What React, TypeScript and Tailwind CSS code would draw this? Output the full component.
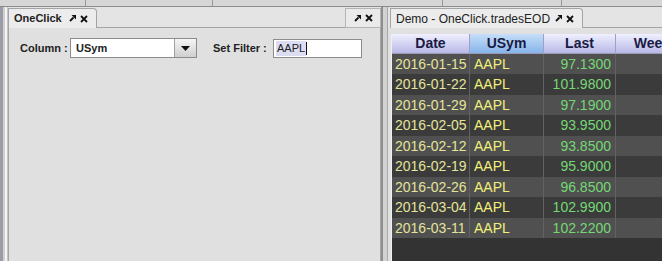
import React from "react"

const rows = [
  { date: "2016-01-15", sym: "AAPL", last: "97.1300" },
  { date: "2016-01-22", sym: "AAPL", last: "101.9800" },
  { date: "2016-01-29", sym: "AAPL", last: "97.1900" },
  { date: "2016-02-05", sym: "AAPL", last: "93.9500" },
  { date: "2016-02-12", sym: "AAPL", last: "93.8500" },
  { date: "2016-02-19", sym: "AAPL", last: "95.9000" },
  { date: "2016-02-26", sym: "AAPL", last: "96.8500" },
  { date: "2016-03-04", sym: "AAPL", last: "102.9900" },
  { date: "2016-03-11", sym: "AAPL", last: "102.2200" },
]

const Pin = () => (
  <svg width="7" height="7" viewBox="0 0 7 7" className="block">
    <path d="M7 0 L7 4.5 L2.5 0 Z" fill="#111" />
    <path d="M4.5 2.5 L1 6" stroke="#111" strokeWidth="1.8" />
  </svg>
)

const Close = () => (
  <svg width="8" height="8" viewBox="0 0 8 8" className="block">
    <path d="M1 1 L7 7 M7 1 L1 7" stroke="#111" strokeWidth="1.8" />
  </svg>
)

const TabIcons = () => (
  <div className="flex items-center gap-[4px]">
    <Pin />
    <Close />
  </div>
)

export default function App() {
  return (
    <div className="w-[662px] h-[261px] overflow-hidden flex flex-col bg-[#e2e2e2] font-['Liberation_Sans',Arial,sans-serif] text-[#222]">
      {/* toolbar remnant */}
      <div className="h-[7px] flex border-b border-[#8c8c8c] bg-[#d6d6d6]">
        <div className="w-[86px] border-r border-[#9a9a9a]" />
        <div className="w-[127px] border-r border-[#9a9a9a]" />
        <div className="w-[230px] border-r border-[#9a9a9a]" />
        <div className="w-[119px] border-r border-[#9a9a9a]" />
        <div className="flex-1" />
      </div>

      <div className="flex flex-1 min-h-0">
        {/* left edge */}
        <div className="w-[8px] flex">
          <div className="w-[3px] bg-[#9c9ca8]" />
          <div className="w-[2px] bg-[#cfcfcf]" />
          <div className="w-[2px] bg-[#f4f4f4]" />
          <div className="w-[1px] bg-[#c4c4c4]" />
        </div>

        {/* OneClick panel */}
        <div className="w-[373px] flex flex-col">
          <div className="h-[21px] flex items-end bg-[#e4e4e4]">
            <div className="w-[89px] h-[20px] flex items-center justify-between pl-[5px] pr-[8px] bg-[#ececec] border border-b-0 border-[#a4a4a4] rounded-tr-[4px]">
              <span className="text-[11px] font-bold">OneClick</span>
              <TabIcons />
            </div>
            <div className="flex-1 h-full border-b border-[#a4a4a4]" />
            <div className="w-[36px] h-[20px] flex items-center justify-center bg-[#eaeaea] border border-[#b4b4b4]">
              <TabIcons />
            </div>
          </div>
          <div className="flex-1 bg-[#e0e0e0] border-l border-r border-[#a4a4a4] pl-[11px] pt-[10px]">
            <div className="flex items-center h-[20px]">
              <span className="text-[11px] font-bold w-[50px]">Column :</span>
              <div className="w-[127px] h-[20px] flex border border-[#8c8c8c] bg-white">
                <div className="flex-1 flex items-center pl-[5px] text-[11px] font-bold">USym</div>
                <div className="w-[22px] flex items-center justify-center border-l border-[#a0a0a0] bg-gradient-to-b from-[#f6f6f6] to-[#cfcfcf]">
                  <svg width="9" height="5" viewBox="0 0 9 5" className="block">
                    <path d="M0 0 L9 0 L4.5 5 Z" fill="#111" />
                  </svg>
                </div>
              </div>
              <span className="text-[11px] font-bold ml-[16px] w-[60px]">Set Filter :</span>
              <div className="w-[89px] h-[19px] flex items-center border border-[#8c8c8c] bg-white pl-[2px]">
                <span className="text-[11px] bg-[#dcdcf2] px-[1px] leading-[15px]">AAPL</span>
                <span className="w-[1px] h-[13px] bg-[#111]" />
              </div>
            </div>
          </div>
        </div>

        {/* splitter */}
        <div className="w-[7px] flex">
          <div className="w-[2px] bg-[#8e8e8e]" />
          <div className="w-[4px] bg-[#d2d2d2]" />
          <div className="w-[1px] bg-[#a8a8a8]" />
        </div>

        {/* table panel */}
        <div className="flex-1 flex flex-col min-w-0">
          <div className="h-[21px] flex items-end bg-[#e4e4e4]">
            <div className="ml-[2px] w-[193px] h-[20px] flex items-center justify-between pl-[5px] pr-[8px] bg-[#ececec] border border-b-0 border-[#a4a4a4] rounded-tr-[4px]">
              <span className="text-[12px]">Demo - OneClick.tradesEOD</span>
              <TabIcons />
            </div>
            <div className="flex-1 h-full border-b border-[#a4a4a4]" />
          </div>
          <div className="flex-1 flex flex-col min-h-0 bg-[#e0e0e0] pt-[6px] pl-[3px]">
            <div className="flex-1 flex flex-col bg-[#333333] overflow-hidden border-l border-[#f0f0f0]">
              <div className="h-[20px] flex shrink-0 text-[14px] font-bold text-[#1a1a44] border-b border-[#9a9ab8]">
                <div className="w-[78px] shrink-0 flex items-center justify-center bg-gradient-to-b from-[#f0f0ff] to-[#b8b8e6] border-r border-[#a0a0c4]">Date</div>
                <div className="w-[74px] shrink-0 flex items-center justify-center bg-gradient-to-b from-[#c6def8] to-[#86b4ea] border-r border-[#a0a0c4]">USym</div>
                <div className="w-[72px] shrink-0 flex items-center justify-center bg-gradient-to-b from-[#f0f0ff] to-[#b8b8e6] border-r border-[#a0a0c4]">Last</div>
                <div className="w-[72px] shrink-0 flex items-center justify-center bg-gradient-to-b from-[#f0f0ff] to-[#b8b8e6] whitespace-nowrap">Week</div>
              </div>
              {rows.map((r, i) => (
                <div
                  key={r.date}
                  className={`flex shrink-0 text-[14px] ${i % 2 === 0 ? "h-[20px] bg-[#505050]" : "h-[21px] bg-[#3b3b3b]"}`}
                >
                  <div className="w-[78px] shrink-0 flex items-center pl-[3px] text-[#e4e49a] border-r border-[#626262]">{r.date}</div>
                  <div className="w-[74px] shrink-0 flex items-center pl-[4px] text-[#f0f07a] border-r border-[#626262]">{r.sym}</div>
                  <div className="w-[72px] shrink-0 flex items-center justify-end pr-[4px] text-[#74d874] border-r border-[#626262]">{r.last}</div>
                  <div className="w-[72px] shrink-0" />
                </div>
              ))}
            </div>
          </div>
        </div>
      </div>
    </div>
  )
}
